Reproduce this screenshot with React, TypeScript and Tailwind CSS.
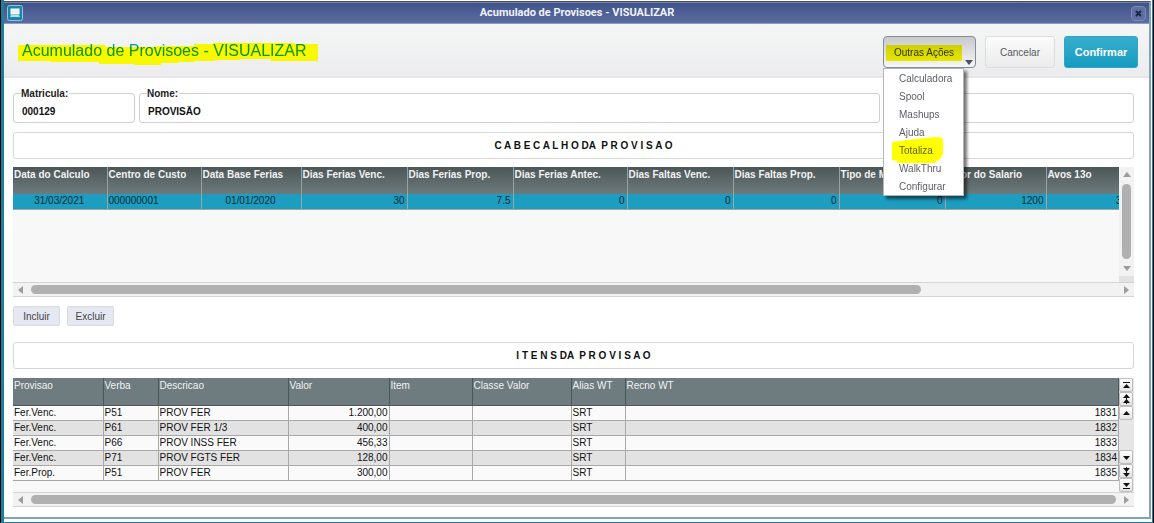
import React from "react";

const headerColumns: { title: string; width: string; value: string; align: string }[] = [
  { title: "Data do Calculo", width: "w-[94px]", value: "31/03/2021", align: "text-center" },
  { title: "Centro de Custo", width: "w-[94px]", value: "000000001", align: "text-left" },
  { title: "Data Base Ferias", width: "w-[100px]", value: "01/01/2020", align: "text-center" },
  { title: "Dias Ferias Venc.", width: "w-[106px]", value: "30", align: "text-right" },
  { title: "Dias Ferias Prop.", width: "w-[106px]", value: "7.5", align: "text-right" },
  { title: "Dias Ferias Antec.", width: "w-[114px]", value: "0", align: "text-right" },
  { title: "Dias Faltas Venc.", width: "w-[106px]", value: "0", align: "text-right" },
  { title: "Dias Faltas Prop.", width: "w-[106px]", value: "0", align: "text-right" },
  { title: "Tipo de Media", width: "w-[106px]", value: "0", align: "text-right" },
  { title: "Valor do Salario", width: "w-[101px]", value: "1200", align: "text-right" },
  { title: "Avos 13o", width: "w-[78px]", value: "3", align: "text-right" },
];

const itemColumns: { title: string; width: string }[] = [
  { title: "Provisao", width: "w-[90px]" },
  { title: "Verba", width: "w-[55px]" },
  { title: "Descricao", width: "w-[130px]" },
  { title: "Valor", width: "w-[101px]" },
  { title: "Item", width: "w-[83px]" },
  { title: "Classe Valor", width: "w-[99px]" },
  { title: "Alias WT", width: "w-[54px]" },
  { title: "Recno WT", width: "" },
];

const items: string[][] = [
  ["Fer.Venc.", "P51", "PROV FER", "1.200,00", "", "", "SRT", "1831"],
  ["Fer.Venc.", "P61", "PROV FER 1/3", "400,00", "", "", "SRT", "1832"],
  ["Fer.Venc.", "P66", "PROV INSS FER", "456,33", "", "", "SRT", "1833"],
  ["Fer.Venc.", "P71", "PROV FGTS FER", "128,00", "", "", "SRT", "1834"],
  ["Fer.Prop.", "P51", "PROV FER", "300,00", "", "", "SRT", "1835"],
];

const menu = ["Calculadora", "Spool", "Mashups", "Ajuda", "Totaliza", "WalkThru", "Configurar"];

function Arrow({ dir }: { dir: "up" | "down" | "left" | "right" }) {
  const points = {
    up: "4,1 8,6 0,6",
    down: "0,2 8,2 4,7",
    left: "1,4 6,0 6,8",
    right: "7,4 2,0 2,8",
  }[dir];
  return (
    <svg viewBox="0 0 8 8" className="block size-2 shrink-0" aria-hidden="true">
      <polygon points={points} fill="#9c9c9c" />
    </svg>
  );
}

function HorizontalBar({ thumb }: { thumb: string }) {
  return (
    <div className="flex h-[15px] items-center border-y border-[#d4d4d4] bg-[#f2f2f2] px-1">
      <button aria-label="Rolar para a esquerda"><Arrow dir="left" /></button>
      <div className="mx-[6px] flex flex-1">
        <div className={`h-[9px] rounded-full bg-[#b0b0b0] ${thumb}`} />
      </div>
      <button aria-label="Rolar para a direita"><Arrow dir="right" /></button>
    </div>
  );
}

const navShapes: Record<string, string> = {
  first: "M2 2h7v1H2zM5.5 4L9 8H2z",
  pageUp: "M5.5 0L9 4H2zM5 4h1v2H5zM5.5 5L9 9H2zM5 9h1v1H5z",
  up: "M5.5 3L9 7H2z",
  down: "M2 4h7L5.5 8z",
  pageDown: "M5 1h1v1H5zM2 2h7L5.5 6zM5 5h1v2H5zM2 7h7L5.5 11z",
  last: "M2 3h7L5.5 7zM2 8h7v1H2z",
};

function NavButton({ kind, label }: { kind: string; label: string }) {
  return (
    <button
      aria-label={label}
      className="flex h-[14px] w-[14px] items-center justify-center rounded-xs border border-[#bdbdbd] bg-gradient-to-b from-white to-[#e4e4e4]"
    >
      <svg viewBox="0 0 11 11" className="size-[11px] shrink-0" aria-hidden="true">
        <path d={navShapes[kind]} fill="#111" />
      </svg>
    </button>
  );
}

function Section({ children }: { children: React.ReactNode }) {
  return (
    <h2 className="flex h-[27px] items-center justify-center rounded-[3px] border border-[#d6d6d6] bg-white pl-5 text-[10px] font-bold text-[#111]">
      {children}
    </h2>
  );
}

function Field({ id, label, value, className }: { id: string; label: string; value: string; className: string }) {
  return (
    <div className={`relative h-[30px] rounded-[3px] border border-[#cfcfcf] ${className}`}>
      {label && (
        <label htmlFor={id} className="absolute -top-[7px] left-[7px] bg-white pr-px text-[10px] leading-[13px] font-bold text-[#222]">
          {label}
        </label>
      )}
      <input
        id={id}
        aria-label={label || "Complemento"}
        defaultValue={value}
        readOnly
        className="h-full w-full bg-transparent px-2 pt-[6px] text-[10px] font-bold text-[#111] outline-none"
      />
    </div>
  );
}

function TitleBar() {
  return (
    <header className="flex h-[22px] items-center border-t border-b border-t-[#7482ac] border-b-[#8f9bc6] bg-gradient-to-b from-[#40548a] to-[#5d6ca0] px-[3px]">
      <svg viewBox="0 0 16 16" className="size-4" aria-hidden="true">
        <rect x=".5" y=".5" width="15" height="15" rx="2" fill="#1787ab" stroke="#8cc9dc" />
        <rect x="4" y="4" width="8" height="5" fill="#e8f2f6" stroke="#fff" />
        <path d="M4 10h8l1 2H3z" fill="#b9dbe6" />
      </svg>
      <h1 className="flex-1 text-center font-[Roboto,sans-serif] text-[11px] font-bold text-[#f0f2f8]">
        Acumulado de Provisoes - VISUALIZAR
      </h1>
      <button aria-label="Fechar" className="flex size-[15px] items-center justify-center rounded-sm border border-[#7c89b6] bg-[#5f6ea3]">
        <svg viewBox="0 0 7 7" className="size-[7px]" aria-hidden="true">
          <path d="M1 1l5 5M6 1L1 6" stroke="#1d2747" strokeWidth="2" />
        </svg>
      </button>
    </header>
  );
}

function Toolbar() {
  return (
    <div className="relative z-10 flex h-[54px] items-start justify-between border-b-2 border-[#e6e6e8] bg-gradient-to-b from-[#f4f6f5] to-[#ececee] pt-3 pr-[11px] pl-[14px]">
      <div className="relative isolate">
        <p className="pt-1 pl-1 text-[16px] leading-[22px] text-[#0a9abf]">Acumulado de Provisoes - VISUALIZAR</p>
        <svg viewBox="0 0 300 22" className="absolute top-[7px] left-0 h-[22px] w-[300px] mix-blend-multiply" aria-hidden="true">
          <path
            d="M0 2H87V4H139V3H176V1H195V0H276V1H300V18H253V16H222V17H197V18H176V19H161V20H143V22H116V21H81V19H32V18H0z"
            fill="#f8f800"
          />
        </svg>
      </div>
      <div className="flex gap-[9px] text-[10px]">
        <div className="relative isolate">
          <button
            aria-haspopup="menu"
            aria-expanded="true"
            className="relative flex h-8 w-[93px] items-center rounded-[4px] border border-[#838c99] bg-gradient-to-b from-[#c9cacc] to-[#f6f6f6] pl-[10px] text-[#333]"
          >
            Outras Ações
            <svg viewBox="0 0 8 5" className="absolute right-[2px] bottom-[2px] h-[5px] w-2" aria-hidden="true">
              <path d="M0 0h8L4 5z" fill="#4b5361" />
            </svg>
          </button>
          <span className="absolute top-[9px] left-[3px] h-4 w-[76px] bg-[#f8f800] mix-blend-multiply" />
          <ul role="menu" className="absolute top-8 left-0 z-10 w-[81px] border border-[#b5b5b5] bg-white shadow-[3px_3px_3px_rgba(0,0,0,0.55)]">
            {menu.map((entry) => (
              <li key={entry} role="none" className="relative isolate">
                <button role="menuitem" className="block h-[18px] w-full pl-[15px] text-left text-[#5c5f66]">
                  {entry}
                </button>
                {entry === "Totaliza" && (
                  <svg viewBox="0 0 52 26" className="absolute -top-1 left-2 h-[26px] w-[52px] mix-blend-multiply" aria-hidden="true">
                    <path d="M0 5L32 1L43 0Q51 0 51 3V17L48 22L42 26H6L5 24L0 23z" fill="#ff0" />
                  </svg>
                )}
              </li>
            ))}
          </ul>
        </div>
        <button className="h-8 w-[70px] rounded-[3px] border border-[#dcdcdc] bg-gradient-to-b from-[#fbfbfb] to-[#ebebeb] text-[#55585e]">
          Cancelar
        </button>
        <button className="h-8 w-[74px] rounded-[3px] border border-[#2ea6c6] bg-gradient-to-b from-[#38adcc] to-[#129cc0] text-[11px] font-bold text-white">
          Confirmar
        </button>
      </div>
    </div>
  );
}

function HeaderGrid() {
  return (
    <section>
      <div className="flex h-[115px] bg-[#f8f8f8]">
        <div className="min-w-0 flex-1 overflow-hidden">
          <table className="w-max table-fixed border-collapse">
            <thead>
              <tr className="h-[27px] bg-gradient-to-b from-[#4c5757] to-[#6d7a7c]">
                {headerColumns.map((c) => (
                  <th key={c.title} className={`${c.width} border-r border-r-[#98a0a1] p-0 pl-px text-left align-top text-[10px] leading-[16px] font-bold whitespace-nowrap text-[#f2f2f2]`}>
                    {c.title}
                  </th>
                ))}
              </tr>
            </thead>
            <tbody>
              <tr className="h-[15px] bg-[#1d9dbf]">
                {headerColumns.map((c) => (
                  <td key={c.title} className={`${c.width} ${c.align} border-r border-b border-[#9da5a7] p-0 pr-[2px] pl-px text-[10px] leading-[14px] text-[#0b2a38]`}>
                    {c.value}
                  </td>
                ))}
              </tr>
            </tbody>
          </table>
        </div>
        <div className="flex w-[15px] flex-col items-center bg-[#f2f2f2] pt-1">
          <button aria-label="Rolar para cima"><Arrow dir="up" /></button>
          <div className="mt-[5px] h-[75px] w-[9px] rounded-full bg-[#b0b0b0]" />
          <button aria-label="Rolar para baixo" className="mt-[5px]"><Arrow dir="down" /></button>
          <div className="mt-auto h-[6px] w-full bg-[#e2e2e2]" />
        </div>
      </div>
      <HorizontalBar thumb="w-[82%]" />
    </section>
  );
}

function ItemsGrid() {
  return (
    <section>
      <div className="flex h-[114px] bg-[#f8f8f8]">
        <div className="min-w-0 flex-1">
          <table className="w-full table-fixed border-collapse text-[10px]">
            <thead>
              <tr className="h-[27px] bg-[#6e7c7f]">
                {itemColumns.map((c) => (
                  <th key={c.title} className={`${c.width} border-r border-b border-r-[#4c5757] border-b-[#4c5757] p-0 pl-px text-left align-top leading-[15px] font-normal text-[#f2f2f2]`}>
                    {c.title}
                  </th>
                ))}
              </tr>
            </thead>
            <tbody>
              {items.map((row) => (
                <tr key={row[7]} className="bg-[#fafafa] even:bg-[#e2e2e2]">
                  {row.map((cell, i) => (
                    <td key={i} className={`h-[15px] border-r border-b border-[#a8a8a8] p-0 px-px leading-[14px] text-[#111] ${i === 3 || i === 7 ? "text-right" : ""}`}>
                      {cell}
                    </td>
                  ))}
                </tr>
              ))}
            </tbody>
          </table>
        </div>
        <div className="flex w-[15px] flex-col justify-between bg-[#e6e6e6]">
          <div className="flex flex-col">
            <NavButton kind="first" label="Primeiro" />
            <NavButton kind="pageUp" label="Pagina anterior" />
            <NavButton kind="up" label="Anterior" />
          </div>
          <div className="flex flex-col">
            <NavButton kind="down" label="Proximo" />
            <NavButton kind="pageDown" label="Proxima pagina" />
            <NavButton kind="last" label="Ultimo" />
          </div>
        </div>
      </div>
      <HorizontalBar thumb="w-full" />
    </section>
  );
}

export default function App() {
  return (
    <div className="min-h-screen bg-black px-px font-['Liberation_Sans',Arial,sans-serif]">
      <div className="border-r border-b border-l-[3px] border-[#1c7f9b] bg-white pt-px pr-px pb-[3px]">
        <div className="border-t border-r-2 border-b-2 border-t-[#4a4f52] border-r-[#7fa3c0] border-b-[#7fa3c0]">
          <TitleBar />
          <Toolbar />
          <main className="pt-[15px] pr-[15px] pb-[10px] pl-[9px]">
            <div className="flex gap-[4px]">
              <Field id="matricula" label="Matricula:" value="000129" className="w-[122px]" />
              <Field id="nome" label="Nome:" value="PROVISÃO" className="flex-1" />
              <Field id="extra" label="" value="" className="w-[250px]" />
            </div>
            <div className="mt-[9px]"><Section>C A B E C A L H O DA{" \u00a0"}P R O V I S A O</Section></div>
            <div className="mt-2"><HeaderGrid /></div>
            <div className="mt-[9px] flex gap-[7px] text-[10px] text-[#444]">
              <button className="h-5 w-[47px] rounded-[2px] border border-[#d8dbe2] bg-[#e5e8f0]">Incluir</button>
              <button className="h-5 w-[47px] rounded-[2px] border border-[#d8dbe2] bg-[#e5e8f0]">Excluir</button>
            </div>
            <div className="mt-4"><Section>I T E N S DA{" \u00a0"}P R O V I S A O</Section></div>
            <div className="mt-[9px]"><ItemsGrid /></div>
          </main>
        </div>
      </div>
    </div>
  );
}
